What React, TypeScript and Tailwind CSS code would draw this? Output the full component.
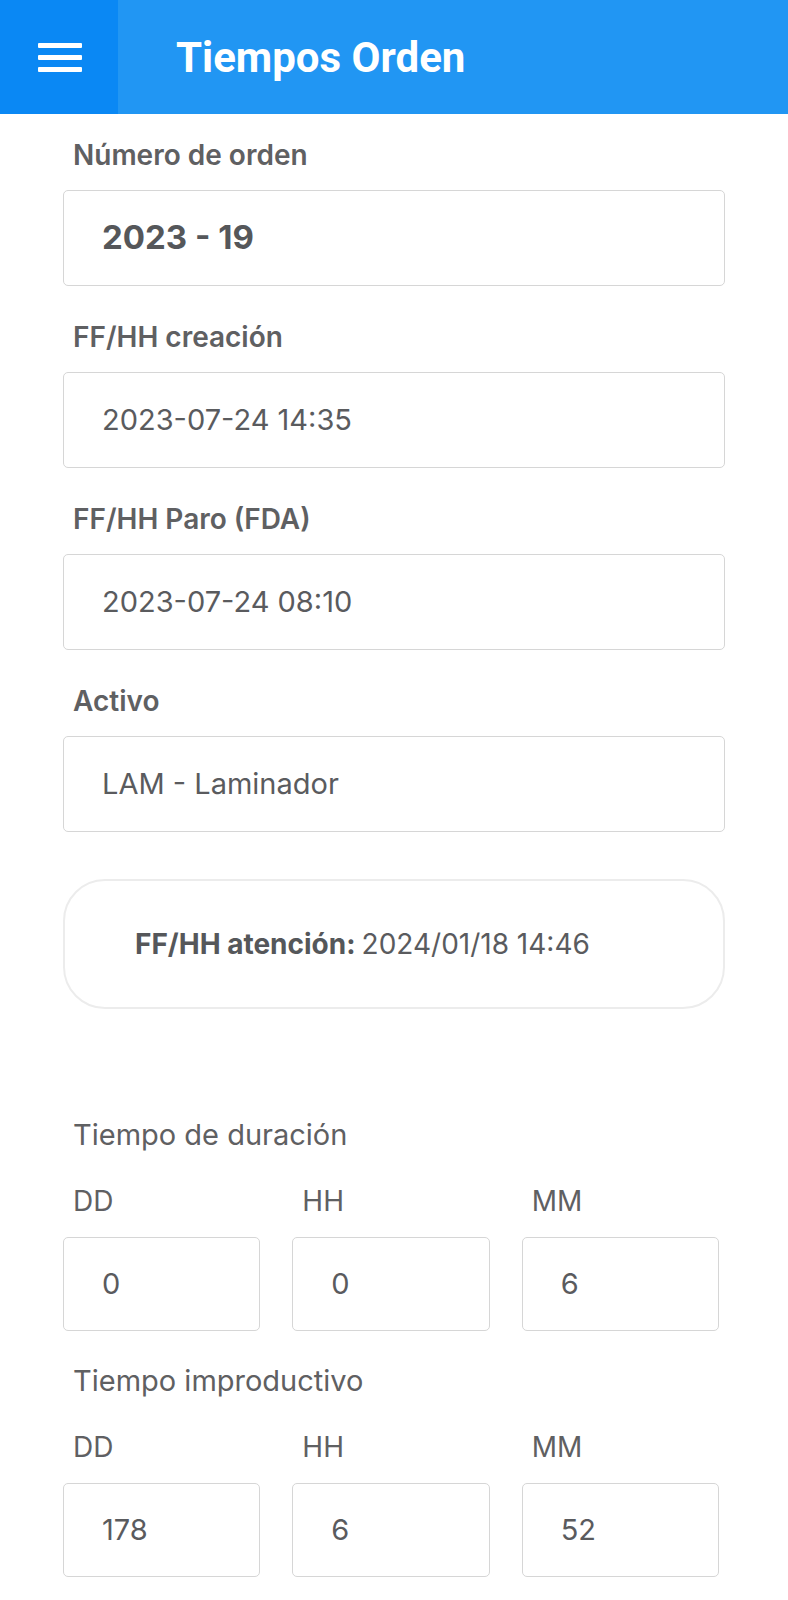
import React from "react";

const font = { fontFamily: "Inter, 'Noto Sans', sans-serif" };

function Field({ label, value, bold }: { label: string; value: string; bold?: boolean }) {
  return (
    <div className="flex flex-col">
      <div className="h-[76px] pt-[21px] pl-[10px] text-[28px] leading-[40px] font-semibold text-[#5f6062]">
        {label}
      </div>
      <div className="h-[96px] rounded-[5px] border border-[#d6d6d6] bg-white flex items-center pl-[38px]">
        <span className={bold ? "text-[33px] font-bold text-[#55575a]" : "text-[29px] text-[#5a5b5e]"}>{value}</span>
      </div>
    </div>
  );
}

function TimeSection({ title, values }: { title: string; values: string[] }) {
  const heads = ["DD", "HH", "MM"];
  return (
    <div className="flex flex-col">
      <div className="pl-[10px] text-[29px] leading-[40px] text-[#5f6062]">{title}</div>
      <div className="grid grid-cols-3 gap-x-[32px] w-[656px] mt-[26px]">
        {heads.map((h) => (
          <div key={h} className="pl-[10px] text-[28px] leading-[40px] text-[#5f6062]">{h}</div>
        ))}
        {values.map((v, i) => (
          <div key={i} className="mt-[16px] h-[94px] rounded-[5px] border border-[#d6d6d6] flex items-center pl-[38px] text-[29px] text-[#5a5b5e]">
            {v}
          </div>
        ))}
      </div>
    </div>
  );
}

export default function App() {
  return (
    <div className="w-[788px] min-h-[1600px] bg-white" style={font}>
      <header className="h-[114px] flex bg-[#2196f3]">
        <div className="w-[118px] h-full bg-[#0a88f4] flex items-center pl-[38px]">
          <div className="flex flex-col gap-[7px] w-[44px]">
            <div className="h-[5px] bg-white rounded-[1px]" />
            <div className="h-[5px] bg-white rounded-[1px]" />
            <div className="h-[5px] bg-white rounded-[1px]" />
          </div>
        </div>
        <div
          className="flex items-center pl-[58px] text-white text-[42px] font-bold"
          style={{ fontFamily: "Roboto, 'Liberation Sans', sans-serif" }}
        >
          Tiempos Orden
        </div>
      </header>

      <main className="px-[63px]">
        <div className="flex flex-col gap-[10px]">
          <Field label="Número de orden" value="2023 - 19" bold />
          <Field label="FF/HH creación" value="2023-07-24 14:35" />
          <Field label="FF/HH Paro (FDA)" value="2023-07-24 08:10" />
          <Field label="Activo" value="LAM - Laminador" />
        </div>

        <div className="mt-[47px] h-[130px] rounded-[42px] border-2 border-[#ececec] flex items-center pl-[70px] text-[28px] text-[#5a5b5e]">
          <span className="font-bold text-[#55575a]">FF/HH atención:</span>
          <span className="ml-[6px]">2024/01/18 14:46</span>
        </div>

        <div className="mt-[106px]">
          <TimeSection title="Tiempo de duración" values={["0", "0", "6"]} />
        </div>
        <div className="mt-[30px]">
          <TimeSection title="Tiempo improductivo" values={["178", "6", "52"]} />
        </div>
      </main>
    </div>
  );
}
